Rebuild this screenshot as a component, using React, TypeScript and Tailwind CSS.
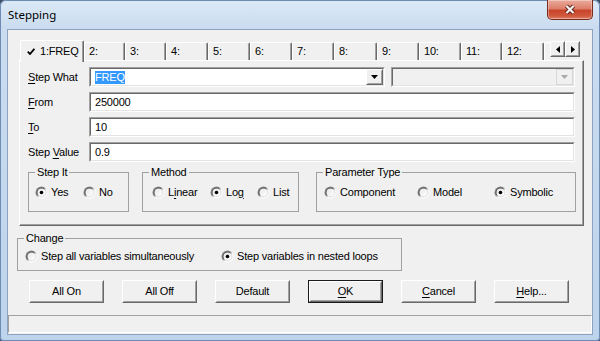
import React from "react";

function Raised({ className = "", inner = "", children }: { className?: string; inner?: string; children?: React.ReactNode }) {
  return (
    <div className={`border border-t-white border-l-white border-r-[#696969] border-b-[#696969] ${className}`}>
      <div className={`w-full h-full border border-t-[#f0f0f0] border-l-[#f0f0f0] border-r-[#a0a0a0] border-b-[#a0a0a0] bg-[#f0f0f0] flex items-center justify-center ${inner}`}>
        {children}
      </div>
    </div>
  );
}

function Sunken({ className = "", inner = "", children }: { className?: string; inner?: string; children?: React.ReactNode }) {
  return (
    <div className={`border border-t-[#a0a0a0] border-l-[#a0a0a0] border-r-white border-b-white ${className}`}>
      <div className={`w-full h-full border border-t-[#696969] border-l-[#696969] border-r-[#e3e3e3] border-b-[#e3e3e3] flex items-center ${inner}`}>
        {children}
      </div>
    </div>
  );
}

function Radio({ checked = false }: { checked?: boolean }) {
  return (
    <svg width="13" height="13" viewBox="0 0 13 13" className="shrink-0">
      <defs>
        <linearGradient id="rgOuter" x1="0" y1="0" x2="1" y2="1">
          <stop offset="0.4" stopColor="#8a8a8a" />
          <stop offset="0.6" stopColor="#ffffff" />
        </linearGradient>
        <linearGradient id="rgInner" x1="0" y1="0" x2="1" y2="1">
          <stop offset="0.4" stopColor="#505050" />
          <stop offset="0.6" stopColor="#dcdcdc" />
        </linearGradient>
        <linearGradient id="rgFill" x1="0" y1="0" x2="1" y2="1">
          <stop offset="0" stopColor="#e6e6e6" />
          <stop offset="1" stopColor="#ffffff" />
        </linearGradient>
      </defs>
      <circle cx="6.5" cy="6.5" r="6" fill="url(#rgOuter)" />
      <circle cx="6.5" cy="6.5" r="5" fill="url(#rgInner)" />
      <circle cx="6.5" cy="6.5" r="4" fill="url(#rgFill)" />
      {checked && <circle cx="6.5" cy="6.5" r="1.8" fill="#000" />}
    </svg>
  );
}

function RadioItem({ checked, w, children }: { checked?: boolean; w: string; children: React.ReactNode }) {
  return (
    <div className={`flex items-center gap-[3px] shrink-0 ${w}`}>
      <Radio checked={checked} />
      <span className="leading-[13px] whitespace-nowrap">{children}</span>
    </div>
  );
}

function U({ children }: { children: React.ReactNode }) {
  return <span className="underline underline-offset-[2px]">{children}</span>;
}

function Down({ color = "#000" }: { color?: string }) {
  return (
    <svg width="7" height="4" viewBox="0 0 7 4">
      <path d="M0 0 H7 L3.5 4 Z" fill={color} />
    </svg>
  );
}

const tabWidths = ["w-[41px]", "w-[41px]", "w-[42px]", "w-[42px]", "w-[42px]", "w-[42px]", "w-[43px]", "w-[42px]", "w-[42px]", "w-[41px]", "w-[42px]"];

export default function App() {
  return (
    <div className="w-[600px] h-[341px] overflow-hidden font-['Liberation_Sans',Arial,sans-serif] text-[11px] tracking-[-0.2px] text-black bg-[#3b4f66]">
      <div className="w-[600px] h-[341px] rounded-t-[6px] rounded-b-[4px] bg-[linear-gradient(to_bottom,#dce9f6_0px,#cadcf0_28px,#bdd4ec_100%)] shadow-[inset_0_0_0_1px_#6d8bb3] flex flex-col">
        {/* title bar */}
        <div className="h-[29px] flex justify-between items-start">
          <div className="pl-[8px] pt-[7px] font-['Noto_Sans',sans-serif] text-[11.5px] tracking-normal leading-[16px] text-black">Stepping</div>
          <div className="mr-[7px] w-[46px] h-[20px] rounded-b-[5px] border border-t-0 border-[#7b2a1e] bg-[linear-gradient(to_bottom,#eaaa9c_0%,#dd806b_45%,#c8442a_55%,#d05a3e_85%,#e0846e_100%)] shadow-[inset_0_0_0_1px_rgba(255,255,255,0.35)] flex items-center justify-center">
            <svg width="14" height="11" viewBox="0 0 14 11">
              <path d="M3.5 2 L10.5 9 M10.5 2 L3.5 9" stroke="#5b2118" strokeWidth="4" />
              <path d="M3.5 2 L10.5 9 M10.5 2 L3.5 9" stroke="#f4f4f4" strokeWidth="2.2" />
            </svg>
          </div>
        </div>

        {/* client */}
        <div className="mx-[7px] h-[306px] bg-[#f0f0f0] border border-[#8ea3bd] flex flex-col">
          {/* tabs + panel */}
          <div className="ml-[11px] mt-[10px] w-[565px] flex flex-col">
            <div className="flex h-[20px]">
              <div className="ml-[1px] w-[530px] h-[22px] overflow-hidden relative z-10 flex items-start">
                <div className="w-[64px] h-[22px] shrink-0 bg-[#f0f0f0] border-t border-l border-r border-t-white border-l-white border-r-[#696969] rounded-t-[2px] shadow-[inset_-1px_0_0_#a0a0a0] flex items-start pl-[6px] pt-[4px] gap-[5px]">
                  <svg width="8" height="7" viewBox="0 0 8 7" className="mt-[3px]">
                    <path d="M0.8 3.6 L3 6 L7.4 0.8" stroke="#000" strokeWidth="1.8" fill="none" />
                  </svg>
                  <span className="leading-[13px]">1:FREQ</span>
                </div>
                {tabWidths.map((w, i) => (
                  <div
                    key={i}
                    className={`${w} shrink-0 mt-[2px] h-[18px] border-t border-l border-r border-t-white border-l-white border-r-[#696969] rounded-t-[2px] shadow-[inset_-1px_0_0_#a0a0a0] flex items-center pl-[4px]`}
                  >
                    <span className="leading-[13px]">{i + 2}:</span>
                  </div>
                ))}
                <div className="w-[42px] shrink-0 mt-[2px] h-[18px] border-t border-l border-t-white border-l-white rounded-tl-[2px]" />
              </div>
              <div className="flex mt-[1px] h-[16px]">
                <Raised className="w-[15px] h-[16px]">
                  <svg width="4" height="7" viewBox="0 0 4 7"><path d="M4 0 V7 L0 3.5 Z" fill="#000" /></svg>
                </Raised>
                <Raised className="w-[15px] h-[16px]">
                  <svg width="4" height="7" viewBox="0 0 4 7"><path d="M0 0 V7 L4 3.5 Z" fill="#000" /></svg>
                </Raised>
              </div>
            </div>
            <div className="w-[565px] h-[166px] border border-t-white border-l-white border-r-[#696969] border-b-[#696969]">
              <div className="w-full h-full border-r border-b border-r-[#a0a0a0] border-b-[#a0a0a0] pl-[8px] pt-[6px] flex flex-col">
                <div className="flex flex-col gap-[5px]">
                  <div className="flex items-center h-[20px]">
                    <div className="w-[61px] leading-[13px]"><U>S</U>tep What</div>
                    <Sunken className="w-[296px] h-[20px] bg-white" inner="pl-[4px]">
                      <span className="bg-[#3399ff] text-white leading-[13px]">FREQ</span>
                      <Raised className="ml-auto w-[17px] h-[16px]"><Down /></Raised>
                    </Sunken>
                    <Sunken className="ml-[6px] w-[184px] h-[20px] bg-[#f0f0f0]">
                      <div className="ml-auto w-[17px] h-[16px] border border-[#d8d8d8] bg-[#f0f0f0] flex items-center justify-center">
                        <Down color="#a8a8a8" />
                      </div>
                    </Sunken>
                  </div>
                  <div className="flex items-center h-[20px]">
                    <div className="w-[61px] leading-[13px]"><U>F</U>rom</div>
                    <Sunken className="w-[486px] h-[20px] bg-white" inner="pl-[4px]">
                      <span className="leading-[13px]">250000</span>
                    </Sunken>
                  </div>
                  <div className="flex items-center h-[20px]">
                    <div className="w-[61px] leading-[13px]"><U>T</U>o</div>
                    <Sunken className="w-[486px] h-[20px] bg-white" inner="pl-[4px]">
                      <span className="leading-[13px]">10</span>
                    </Sunken>
                  </div>
                  <div className="flex items-center h-[20px]">
                    <div className="w-[61px] leading-[13px]">Step <U>V</U>alue</div>
                    <Sunken className="w-[486px] h-[20px] bg-white" inner="pl-[4px]">
                      <span className="leading-[13px]">0.9</span>
                    </Sunken>
                  </div>
                </div>
                <div className="flex mt-[4px]">
                  <fieldset className="w-[101px] h-[46px] border border-[#a0a0a0] m-0 p-0 min-w-0">
                    <legend className="ml-[6px] px-[2px] leading-[13px]">Step It</legend>
                    <div className="flex items-center h-[14px] mt-[6px] pl-[6px]">
                      <RadioItem checked w="w-[48px]">Yes</RadioItem>
                      <RadioItem w="w-[40px]">No</RadioItem>
                    </div>
                  </fieldset>
                  <fieldset className="ml-[13px] w-[157px] h-[46px] border border-[#a0a0a0] m-0 p-0 min-w-0">
                    <legend className="ml-[6px] px-[2px] leading-[13px]">Method</legend>
                    <div className="flex items-center h-[14px] mt-[6px] pl-[9px]">
                      <RadioItem w="w-[58px]">L<U>i</U>near</RadioItem>
                      <RadioItem checked w="w-[47px]">Lo<U>g</U></RadioItem>
                      <RadioItem w="w-[40px]">List</RadioItem>
                    </div>
                  </fieldset>
                  <fieldset className="ml-[17px] w-[260px] h-[46px] border border-[#a0a0a0] m-0 p-0 min-w-0">
                    <legend className="ml-[6px] px-[2px] leading-[13px]">Parameter Type</legend>
                    <div className="flex items-center h-[14px] mt-[6px] pl-[7px]">
                      <RadioItem w="w-[93px]">Component</RadioItem>
                      <RadioItem w="w-[77px]">Model</RadioItem>
                      <RadioItem checked w="w-[70px]">Symbolic</RadioItem>
                    </div>
                  </fieldset>
                </div>
              </div>
            </div>
          </div>

          {/* Change group */}
          <fieldset className="ml-[9px] mt-[6px] w-[385px] h-[39px] border border-[#a0a0a0] p-0 min-w-0">
            <legend className="ml-[6px] px-[2px] leading-[13px]">Change</legend>
            <div className="flex items-center h-[14px] mt-[4px] pl-[7px]">
              <RadioItem w="w-[196px]">Step all variables simultaneously</RadioItem>
              <RadioItem checked w="w-[170px]">Step variables in nested loops</RadioItem>
            </div>
          </fieldset>

          {/* buttons */}
          <div className="ml-[21px] mt-[9px] flex gap-[18px]">
            <Raised className="w-[75px] h-[23px]"><span className="leading-[13px]">All On</span></Raised>
            <Raised className="w-[75px] h-[23px]"><span className="leading-[13px]">All Off</span></Raised>
            <Raised className="w-[75px] h-[23px]"><span className="leading-[13px]">Default</span></Raised>
            <div className="w-[75px] h-[23px] border border-[#1a1a1a]">
              <Raised className="w-full h-full"><span className="leading-[13px]"><U>O</U>K</span></Raised>
            </div>
            <Raised className="w-[75px] h-[23px]"><span className="leading-[13px]"><U>C</U>ancel</span></Raised>
            <Raised className="w-[75px] h-[23px]"><span className="leading-[13px]"><U>H</U>elp...</span></Raised>
          </div>

          {/* status bar */}
          <div className="mt-[12px] h-[18px] border border-t-[#a0a0a0] border-l-[#a0a0a0] border-r-white border-b-white" />
        </div>
      </div>
    </div>
  );
}
